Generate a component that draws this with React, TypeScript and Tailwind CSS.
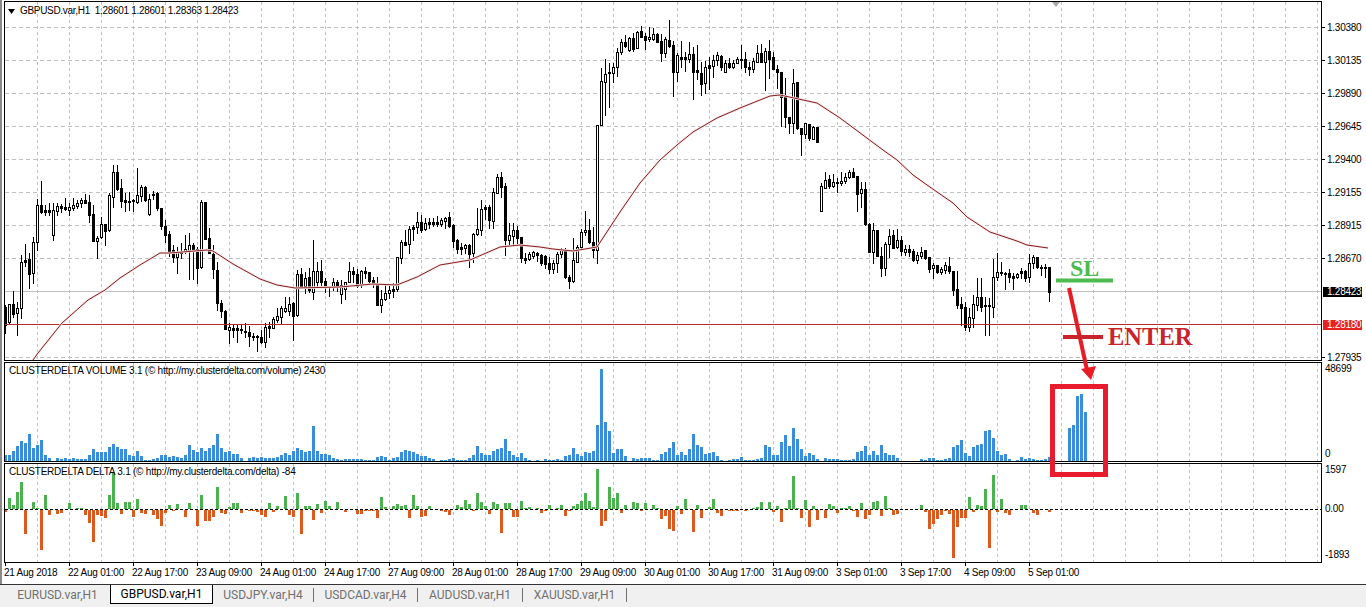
import React from 'react';

type Candle = [number, number, number, number, number];

// [wick top, body top, body bottom, wick bottom, hollow]
const candles: Candle[] = [
  [305,307,325,333,0],[304,304,322,323,1],[291,304,314,317,0],[302,308,313,335,1],[255,262,308,318,1],
  [244,260,262,266,0],[253,259,274,288,0],[237,242,273,283,1],[199,205,242,250,1],[181,205,212,213,0],
  [205,210,212,215,0],[203,210,212,215,0],[203,210,235,240,1],[203,206,211,215,1],[204,206,208,212,0],
  [198,207,209,210,0],[203,207,210,215,1],[198,205,208,210,1],[200,203,206,208,1],[198,200,203,207,1],
  [194,200,203,203,0],[195,202,215,222,0],[205,214,241,241,0],[236,238,241,258,1],[217,224,237,238,1],
  [224,224,231,245,0],[193,195,230,231,1],[165,172,197,207,1],[165,172,189,190,0],[179,188,201,207,0],
  [193,200,202,211,0],[192,201,202,210,0],[199,200,201,211,0],[168,195,202,203,1],[185,187,196,201,1],
  [186,187,200,201,0],[194,199,214,215,1],[191,194,195,199,0],[192,193,208,210,0],[208,208,226,229,0],
  [220,226,235,242,0],[231,234,251,256,0],[245,250,257,262,0],[247,252,257,273,1],[243,251,253,258,0],
  [235,249,252,253,1],[233,245,250,279,1],[243,245,249,279,0],[247,249,268,283,0],[200,202,267,268,1],
  [202,202,239,239,0],[228,238,253,253,0],[245,254,269,278,0],[262,270,303,310,0],[300,303,311,317,0],
  [310,311,329,329,0],[323,327,330,343,1],[325,328,330,337,0],[325,328,330,342,0],[325,329,330,333,0],
  [323,331,332,337,0],[326,332,336,346,0],[333,336,337,340,1],[335,336,337,351,0],[330,337,342,343,0],
  [323,327,342,347,1],[322,326,328,337,0],[317,319,328,328,1],[308,316,320,322,1],[306,308,317,323,1],
  [297,308,311,312,1],[297,304,311,315,1],[302,303,316,340,0],[270,274,315,316,1],[268,274,286,287,0],
  [272,278,286,293,1],[268,277,290,292,0],[240,271,292,299,1],[262,271,282,287,1],[260,271,282,285,0],
  [278,281,287,292,0],[286,286,287,296,0],[278,282,286,290,1],[280,282,287,291,0],
  [280,285,294,303,1],[282,282,289,299,1],[262,271,282,282,1],[267,271,274,282,0],[269,274,286,287,0],
  [270,271,285,287,1],[267,271,273,278,0],[272,272,281,283,0],[277,280,282,287,0],[277,283,305,305,0],
  [290,299,305,312,1],[285,293,299,300,1],[285,290,293,298,1],[283,289,291,297,0],[257,257,289,291,1],
  [240,242,258,263,1],[230,242,245,245,0],[226,229,244,253,1],[225,227,229,240,0],[212,222,227,233,1],
  [215,222,230,232,0],[218,223,229,230,1],[218,222,224,228,0],[218,222,224,226,0],[216,222,224,226,0],
  [218,220,224,226,1],[217,218,221,228,1],[212,217,226,227,0],[224,225,241,247,0],[239,240,249,253,0],
  [243,247,249,254,0],[244,245,248,253,1],[244,245,254,267,0],[233,234,253,262,1],[208,229,234,235,1],
  [200,209,230,235,1],[205,207,209,219,0],[205,207,220,228,0],[188,192,221,228,1],[174,177,193,193,1],
  [172,177,187,197,0],[183,186,240,255,0],[223,235,240,245,1],[223,230,236,245,1],[226,230,238,245,0],
  [237,237,258,262,0],[253,258,260,263,0],[252,254,259,260,1],[251,252,256,258,1],[252,253,255,261,0],
  [254,255,263,265,0],[255,256,264,268,0],[257,263,269,273,0],[260,263,269,273,1],[252,254,263,272,1],
  [248,250,254,257,1],[248,250,277,278,0],[275,277,281,288,0],[238,260,281,282,1],[245,247,262,262,1],
  [229,232,247,248,1],[211,230,232,235,1],[219,230,242,243,0],[227,242,250,257,0],[125,125,250,263,1],
  [68,81,125,125,1],[59,74,82,115,1],[63,72,73,107,0],[63,67,73,82,1],[48,52,67,76,1],
  [39,42,52,54,1],[35,42,46,47,0],[37,38,50,51,1],[33,38,49,51,0],[31,32,48,48,1],
  [26,31,37,37,0],[33,36,40,49,0],[27,37,39,41,1],[28,34,39,40,1],[33,34,42,42,0],
  [34,41,53,61,0],[37,39,53,57,1],[20,40,46,47,0],[41,45,72,96,0],[53,55,72,81,1],
  [41,57,59,67,0],[52,57,59,71,0],[42,54,59,62,1],[47,54,72,99,0],[45,70,72,79,0],
  [62,73,84,95,0],[61,67,83,93,1],[57,65,68,89,0],[55,60,66,77,1],[52,55,60,65,1],
  [55,56,67,70,0],[60,63,72,72,1],[58,63,67,68,0],[60,63,67,68,1],[57,59,63,63,1],
  [45,59,60,68,0],[52,59,67,72,0],[62,67,69,75,0],[58,61,69,72,1],[45,53,62,62,1],
  [44,53,62,62,0],[48,51,62,90,1],[40,51,59,78,0],[52,57,69,69,0],[65,69,72,88,0],
  [72,72,97,126,0],[78,95,117,127,0],[117,117,123,133,0],[69,83,123,133,1],[82,82,128,129,0],
  [128,128,134,155,0],[123,123,134,138,1],[124,124,138,140,0],[126,127,139,139,1],[127,127,142,142,0],
  [183,186,211,211,1],[172,180,188,188,1],[175,179,186,188,0],[174,182,186,187,1],[178,182,183,192,0],
  [172,181,183,185,1],[173,177,181,183,1],[170,172,177,178,1],[168,172,177,177,0],[176,176,194,211,0],
  [182,189,193,207,1],[182,189,224,225,0],[223,224,252,252,0],[223,230,252,263,1],[230,230,256,256,0],
  [247,256,268,276,0],[242,244,268,275,1],[229,236,244,257,1],[230,235,248,248,0],[229,240,247,248,1],
  [236,240,251,255,0],[245,249,252,255,1],[245,249,252,256,0],[249,251,260,261,0],[252,255,260,263,1],
  [247,252,256,258,1],[250,250,258,259,0],[257,257,269,272,0],[263,265,268,278,1],[265,265,272,273,0],
  [267,269,272,274,1],[262,265,270,273,1],[257,266,271,273,0],[271,271,290,295,0],[271,289,305,308,0],
  [297,304,308,325,0],[302,307,327,330,0],[308,317,327,331,1],[295,304,318,327,1],[278,297,305,310,1],
  [278,297,307,311,0],[297,305,306,335,0],[298,305,306,335,0],[259,277,307,317,1],[253,272,277,280,1],
  [262,272,273,275,0],[272,273,274,289,0],[269,273,277,282,0],[273,276,278,289,0],[273,274,277,278,1],
  [268,271,273,278,0],[270,271,278,281,0],[254,263,277,282,1],[255,257,263,268,1],[257,257,267,268,0],
  [265,267,268,275,0],[264,267,268,277,0],[267,267,292,301,0],
];

const volumes = [
  6,6,10,15,20,18,27,13,16,21,6,3,0,3,2,3,2,3,2,2,2,6,12,9,9,9,14,17,14,12,12,6,5,10,5,1,1,2,3,6,6,4,
  5,4,3,6,16,11,9,13,10,13,16,27,13,9,10,7,7,3,0,3,4,3,4,3,3,3,4,6,8,6,10,13,11,9,10,35,10,7,7,6,3,2,
  1,2,2,2,2,2,1,1,1,4,5,4,1,3,4,9,11,10,9,7,5,5,3,2,0,1,1,2,3,1,1,1,3,6,15,8,6,6,10,12,13,22,10,6,4,8,
  3,1,0,1,0,2,1,1,2,1,5,6,13,7,5,9,8,10,36,92,39,30,8,12,12,5,0,3,2,3,3,3,1,1,7,9,13,19,6,9,6,12,27,16,
  14,7,8,9,5,1,0,1,2,2,4,1,1,1,2,3,16,14,6,6,19,26,15,33,22,12,5,8,6,2,0,3,2,2,2,1,1,1,2,9,10,15,6,10,
  6,16,8,6,6,3,0,0,0,0,0,2,1,3,3,1,1,2,3,14,16,21,8,5,14,16,17,30,31,23,10,6,7,2,0,1,4,2,3,2,1,1,2,4,
  0,0,0,0,33,36,65,67,49,
];

const deltas = [
  -2,11,4,17,27,-24,0,7,1,-40,14,-5,0,-4,-3,0,6,0,1,1,-5,-13,-32,-5,-6,-8,14,37,6,-4,7,7,-7,10,-3,-4,0,
  -5,-9,-16,-3,4,-1,5,0,-7,6,0,-16,14,-11,-11,-7,22,-3,-4,2,6,6,-3,0,-1,-1,-2,-5,-7,6,-2,3,0,13,-5,-7,
  16,-24,3,3,-10,5,-3,8,3,0,7,
  0,-2,0,0,-4,-4,-1,-1,-1,-8,12,2,0,3,5,3,4,-8,14,3,-7,-6,3,0,0,-1,-2,-5,0,4,2,9,5,-1,16,7,3,-4,7,5,-23,
  6,6,-7,-7,8,1,2,0,1,-3,-1,4,0,1,4,-6,-1,3,5,8,16,8,2,40,-16,-11,22,11,16,-3,4,0,7,6,-1,6,0,4,1,-9,-6,
  -19,-21,3,-4,10,0,-22,4,
  -8,0,2,10,-3,-6,0,-1,-1,-1,0,-1,0,1,2,7,0,7,-2,3,-12,1,9,33,1,-8,9,-17,3,-10,0,-8,5,3,-3,1,1,3,-1,-7,
  6,-9,-5,7,8,-6,13,1,-5,-4,0,0,0,0,0,4,-2,-19,-14,-9,-5,-1,-4,-48,-17,-8,-8,12,-2,4,3,20,-38,34,-2,10,
  -3,-5,0,0,4,4,0,-3,-5,0,0,-2,
];

const maLine =
  '33,360 38,353 62,323 88,300 105,290 120,278 140,265 160,253 170,253 207,250 213,251 233,264 260,279 277,285 295,288 340,287 373,284 397,285 417,277 440,265 470,260 500,247 520,245 540,247 553,249 573,251 597,247 620,212 640,183 660,160 677,145 693,132 717,118 740,108 770,96 780,95 817,103 840,118 883,150 897,160 913,175 937,192 953,203 967,217 990,232 1017,241 1027,245 1048,248';

const gridX = Array.from({ length: 41 }, (_, i) => 37 + i * 32);
const gridY = [27, 60, 93, 126, 159, 192, 225, 258, 324, 357];

const priceRows = ['1.30380', '1.30135', '1.29890', '1.29645', '1.29400', '1.29155', '1.28915', '1.28670', '1.28423', '1.28180', '1.27935'];

const dates = [
  '21 Aug 2018', '22 Aug 01:00', '22 Aug 17:00', '23 Aug 09:00', '24 Aug 01:00', '24 Aug 17:00', '27 Aug 09:00',
  '28 Aug 01:00', '28 Aug 17:00', '29 Aug 09:00', '30 Aug 01:00', '30 Aug 17:00', '31 Aug 09:00', '3 Sep 01:00',
  '3 Sep 17:00', '4 Sep 09:00', '5 Sep 01:00',
];

const tabs = [
  { name: 'EURUSD.var,H1', box: 'w-[108px] pl-[3px]', rule: false },
  { name: 'USDJPY.var,H4', box: 'w-[101px]', rule: true },
  { name: 'USDCAD.var,H4', box: 'w-[104px]', rule: true },
  { name: 'AUDUSD.var,H1', box: 'w-[105px]', rule: true },
  { name: 'XAUUSD.var,H1', box: 'w-[104px]', rule: true },
];

const GridLines = ({ y0, y1 }: { y0: number; y1: number }): JSX.Element => (
  <g stroke="#c0c0c0" strokeDasharray="3 3">
    {gridX.map((x) => (
      <line key={x} x1={x + 0.5} x2={x + 0.5} y1={y0} y2={y1} />
    ))}
  </g>
);

const PriceChart = (): JSX.Element => (
  <svg className="block w-[1316px] h-[358px]" viewBox="5 2 1316 358" shapeRendering="crispEdges">
    <GridLines y0={2} y1={360} />
    <g stroke="#c0c0c0" strokeDasharray="4 3">
      {gridY.map((y) => (
        <line key={y} x1={5} x2={1321} y1={y + 0.5} y2={y + 0.5} />
      ))}
    </g>
    <line x1={5} x2={1321} y1={291.5} y2={291.5} stroke="#c0c0c0" />
    {candles.map(([hi, top, bot, lo, hollow], i) => {
      const c = 5 + i * 4;
      return (
        <g key={i}>
          <rect x={c} y={hi} width={1} height={lo - hi + 1} fill="#000" />
          <rect x={c - 1} y={top} width={3} height={bot - top + 1} fill="#000" />
          {hollow === 1 && bot - top > 1 && <rect x={c} y={top + 1} width={1} height={bot - top - 1} fill="#fff" />}
        </g>
      );
    })}
    <line x1={5} x2={1321} y1={324.5} y2={324.5} stroke="#b52a2e" />
    <g shapeRendering="auto" fill="none">
      <polyline points={maLine} stroke="#fae8e8" strokeWidth={2.5} />
      <polyline points={maLine} stroke="#851c1e" strokeWidth={1} />
    </g>
    <polygon points="1052,2 1060,2 1056,7" fill="#a8a8a8" shapeRendering="auto" />
  </svg>
);

const VolumeChart = (): JSX.Element => (
  <svg className="block w-[1316px] h-[98px]" viewBox="5 363 1316 98" shapeRendering="crispEdges">
    <GridLines y0={363} y1={461} />
    {volumes.map((h, i) => (
      <rect key={i} x={4 + i * 4} y={461 - h} width={3} height={h} fill="#3a8ddc" />
    ))}
  </svg>
);

const DeltaChart = (): JSX.Element => (
  <svg className="block w-[1316px] h-[98px]" viewBox="5 464 1316 98" shapeRendering="crispEdges">
    <GridLines y0={464} y1={562} />
    {deltas.map((d, i) =>
      d >= 0 ? (
        <rect key={i} x={4 + i * 4} y={509 - d} width={3} height={d} fill="#4cb24f" />
      ) : (
        <rect key={i} x={4 + i * 4} y={510} width={3} height={-d} fill="#dc5a20" />
      ),
    )}
    <line x1={5} x2={1321} y1={509.5} y2={509.5} stroke="#000" strokeDasharray="3 2" />
  </svg>
);

const PanelLabel = ({ text }: { text: string }): JSX.Element => (
  <span className="absolute left-[4px] top-[2px] text-[10px] tracking-[-0.23px] leading-[12px] text-black whitespace-pre">{text}</span>
);

const App = (): JSX.Element => (
  <div className="w-[1366px] h-[607px] overflow-hidden bg-white flex flex-col font-['Liberation_Sans',sans-serif]">
    <div className="relative flex-1 border-l-2 border-[#8a8a8a] pl-[2px] pt-px flex flex-col">
      {/* main chart */}
      <div className="flex h-[360px]">
        <div className="relative w-[1318px] h-[360px] border border-black">
          <PriceChart />
          <div className="absolute left-[3px] top-[3px] flex items-center gap-[5px]">
            <svg width="7" height="5" viewBox="0 0 7 5" className="block">
              <polygon points="0,0 7,0 3.5,5" fill="#000" />
            </svg>
            <span className="text-[10px] tracking-[-0.31px] leading-[12px] text-black whitespace-pre">GBPUSD.var,H1  1.28601 1.28601 1.28363 1.28423</span>
          </div>
        </div>
        <div className="flex-1 flex flex-col pt-[10px] h-[360px]">
          {priceRows.map((p) => (
            <div key={p} className="h-[33px] shrink-0 flex items-center text-[10px] tracking-[-0.25px] text-black">
              {p === '1.28423' ? (
                <span className="ml-px w-[39px] h-[10px] pl-[4px] leading-[10px] whitespace-nowrap bg-black text-white">{p}</span>
              ) : p === '1.28180' ? (
                <span className="ml-px w-[39px] h-[10px] pl-[4px] leading-[10px] whitespace-nowrap bg-[#e8201f] text-white">{p}</span>
              ) : (
                <>
                  <div className="w-[3px] h-px bg-black" />
                  <span className="ml-[2px]">{p}</span>
                </>
              )}
            </div>
          ))}
        </div>
      </div>

      {/* volume */}
      <div className="flex h-[100px] mt-px">
        <div className="relative w-[1318px] h-[100px] border border-black">
          <VolumeChart />
          <PanelLabel text="CLUSTERDELTA VOLUME 3.1 (© http://my.clusterdelta.com/volume) 2430" />
        </div>
        <div className="flex-1 flex flex-col justify-between pl-[3px] pt-px pb-[2px] text-[10px] tracking-[-0.25px] leading-[12px] text-black">
          <span>48699</span>
          <span>0</span>
        </div>
      </div>

      {/* delta */}
      <div className="flex h-[100px] mt-px">
        <div className="relative w-[1318px] h-[100px] border border-black">
          <DeltaChart />
          <PanelLabel text="CLUSTERDELTA DELTA 3.1 (© http://my.clusterdelta.com/delta) -84" />
        </div>
        <div className="flex-1 flex flex-col pl-[3px] pt-px text-[10px] tracking-[-0.25px] leading-[12px] text-black">
          <span>1597</span>
          <span className="mt-[27px]">0.00</span>
          <span className="mt-[34px]">-1893</span>
        </div>
      </div>

      {/* time axis */}
      <div className="flex h-[21px]">
        {dates.map((d) => (
          <div key={d} className="w-[64px] shrink-0">
            <div className="ml-px w-px h-[3px] bg-black" />
            <div className="text-[10px] tracking-[-0.25px] leading-[12px] text-black whitespace-nowrap mt-px">{d}</div>
          </div>
        ))}
      </div>

      {/* drawn trade marks on top of the chart */}
      <svg className="absolute left-[-2px] top-0 w-[1366px] h-[584px] pointer-events-none" viewBox="0 0 1366 584">
        <line x1={1056} x2={1113} y1={280.5} y2={280.5} stroke="#4dbb4f" strokeWidth={4} />
        <line x1={1069} y1={288} x2={1087} y2={370} stroke="#e81c24" strokeWidth={4} />
        <polygon points="1081,369 1096,366 1091,380" fill="#e81c24" />
        <line x1={1063} x2={1103} y1={337} y2={337} stroke="#c9242c" strokeWidth={4} />
        <rect x={1052.5} y={386.5} width={53} height={88} fill="none" stroke="#e81c2c" strokeWidth={5} />
      </svg>
      <span className="absolute left-[1068px] top-[255px] text-[24px] leading-[26px] font-bold text-[#4dbb4f] font-['Liberation_Serif',serif]">SL</span>
      <span className="absolute left-[1106px] top-[324px] text-[24.5px] leading-[26px] font-bold text-[#c9242c] font-['Liberation_Serif',serif]">ENTER</span>
    </div>

    {/* symbol tabs */}
    <div className="h-[23px] border-t border-[#333] bg-[#f0f0f0] flex pl-[2px]">
      <div className={`${tabs[0].box} h-[19px] flex items-center`}>
        <span className="flex-1 text-center text-[12px] leading-[18px] text-[#707070] font-['Roboto',sans-serif]">{tabs[0].name}</span>
      </div>
      <div className="w-[103px] h-[19px] bg-white border-x border-b border-black text-[12px] leading-[18px] text-black text-center font-['Roboto',sans-serif]">
        GBPUSD.var,H1
      </div>
      {tabs.slice(1).map((t) => (
        <div key={t.name} className={`${t.box} h-[19px] flex items-center`}>
          <span className="flex-1 text-center text-[12px] leading-[18px] text-[#707070] font-['Roboto',sans-serif]">{t.name}</span>
          <div className="w-px h-[14px] bg-[#707070]" />
        </div>
      ))}
    </div>
  </div>
);

export default App;
